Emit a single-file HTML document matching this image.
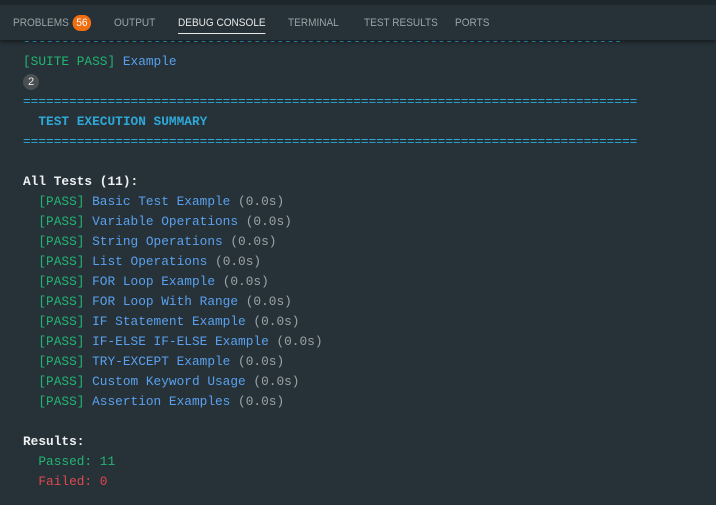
<!DOCTYPE html>
<html><head><style>
body{margin:0;width:716px;height:505px;background:#263238;overflow:hidden;font-family:"Liberation Sans",sans-serif}
.hdr{position:absolute;top:0;left:0;width:716px;height:40px;background:#263238;border-top:5px solid #1e272c;box-sizing:border-box;box-shadow:0 2px 4px rgba(0,0,0,.45);z-index:2}
.tab{position:absolute;top:12px;font-size:10.8px;color:#9aa3a8;transform:scaleX(0.93);transform-origin:left}
.tab.act{color:#e8e8e8}
.tab.act:after{content:"";position:absolute;left:0;right:0;top:16px;height:1px;background:#e8e8e8}
.bad{display:inline-block;background:#f26d0f;color:#fff;border-radius:9px;padding:0 4px;font-size:11px;line-height:16px;margin-left:4px}
.con{position:absolute;top:32px;left:23px;font-family:"Liberation Mono",monospace;font-size:12.8px;line-height:20px;white-space:pre;color:#d8dee3}
.g{color:#21b672}.b{color:#5aa0ee}.gr{color:#9ba3a7}.c{color:#2fa8d8}.r{color:#e0484e}.w{color:#eef0f2;font-weight:bold}
.n{display:inline-block;width:16px;height:16px;border-radius:8px;background:#4a4f52;color:#eee;font-size:11px;line-height:16px;text-align:center;font-family:"Liberation Sans",sans-serif;vertical-align:middle}
</style></head><body>
<div class="hdr">
<span class="tab" style="left:13px;top:10px">PROBLEMS<span class="bad">56</span></span>
<span class="tab" style="left:114px">OUTPUT</span>
<span class="tab act" style="left:178px">DEBUG CONSOLE</span>
<span class="tab" style="left:288px">TERMINAL</span>
<span class="tab" style="left:364px">TEST RESULTS</span>
<span class="tab" style="left:455px">PORTS</span>
</div>
<div class="con"><span class="c">------------------------------------------------------------------------------</span>
<span class="g">[SUITE PASS]</span> <span class="b">Example</span>
<span class="n">2</span>
<span class="c">================================================================================</span>
<span class="c" style="font-weight:bold">  TEST EXECUTION SUMMARY</span>
<span class="c">================================================================================</span>

<span class="w">All Tests (11):</span>
  <span class="g">[PASS]</span> <span class="b">Basic Test Example</span> <span class="gr">(0.0s)</span>
  <span class="g">[PASS]</span> <span class="b">Variable Operations</span> <span class="gr">(0.0s)</span>
  <span class="g">[PASS]</span> <span class="b">String Operations</span> <span class="gr">(0.0s)</span>
  <span class="g">[PASS]</span> <span class="b">List Operations</span> <span class="gr">(0.0s)</span>
  <span class="g">[PASS]</span> <span class="b">FOR Loop Example</span> <span class="gr">(0.0s)</span>
  <span class="g">[PASS]</span> <span class="b">FOR Loop With Range</span> <span class="gr">(0.0s)</span>
  <span class="g">[PASS]</span> <span class="b">IF Statement Example</span> <span class="gr">(0.0s)</span>
  <span class="g">[PASS]</span> <span class="b">IF-ELSE IF-ELSE Example</span> <span class="gr">(0.0s)</span>
  <span class="g">[PASS]</span> <span class="b">TRY-EXCEPT Example</span> <span class="gr">(0.0s)</span>
  <span class="g">[PASS]</span> <span class="b">Custom Keyword Usage</span> <span class="gr">(0.0s)</span>
  <span class="g">[PASS]</span> <span class="b">Assertion Examples</span> <span class="gr">(0.0s)</span>

<span class="w">Results:</span>
  <span class="g">Passed: 11</span>
  <span class="r">Failed: 0</span></div>
</body></html>
